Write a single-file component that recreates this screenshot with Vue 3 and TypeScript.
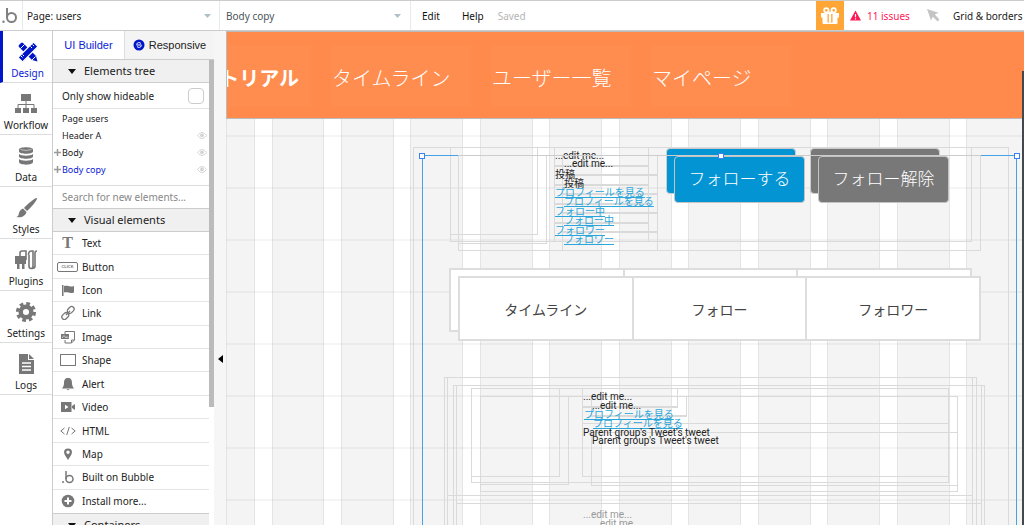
<script setup lang="ts">
import { ref } from 'vue'

interface Rect { left: string; top: string; width: string; height: string }
interface Label { x: number; y: number; text: string; kind: string }

const ORIGIN_X = 226
const ORIGIN_Y = 31

// Converts editor coordinates (two corners) to a box on the canvas.
function box(x1: number, y1: number, x2: number, y2: number): Rect {
  return {
    left: `${x1 - ORIGIN_X}px`,
    top: `${y1 - ORIGIN_Y}px`,
    width: `${x2 - x1}px`,
    height: `${y2 - y1}px`,
  }
}
function at(x: number, y: number) {
  return { left: `${x - ORIGIN_X}px`, top: `${y - ORIGIN_Y}px` }
}

const tools = ['Design', 'Workflow', 'Data', 'Styles', 'Plugins', 'Settings', 'Logs']
const tree = [
  { name: 'Page users', plus: false, eye: false, active: false },
  { name: 'Header A', plus: false, eye: true, active: false },
  { name: 'Body', plus: true, eye: true, active: false },
  { name: 'Body copy', plus: true, eye: true, active: true },
]
const elements = ['Text', 'Button', 'Icon', 'Link', 'Image', 'Shape', 'Alert', 'Video', 'HTML', 'Map', 'Built on Bubble', 'Install more...']
const hideable = ref(false)
const query = ref('')

const columns = Array.from({ length: 12 }, (_, i) => {
  const start = i === 0 ? 226 : Math.round(271.5 + (i - 1) * 69.45)
  const end = i === 11 ? 1040 : Math.round(255 + i * 69.45)
  return box(start, 31, end, 625)
})
const rows = Array.from({ length: 8 }, (_, i) => at(226, 135 + i * 52))

const outlines: Rect[] = [
  [413, 147, 1009, 700],
  [422, 155, 1017, 700],
  [450, 147, 972, 242], [458, 155, 981, 251],
  [450, 147, 538, 235], [458, 155, 547, 244],
  [554, 147, 649, 242], [562, 155, 658, 251],
  [444, 377, 977, 700], [447, 377, 973, 496],
  [453, 385, 985, 700], [456, 385, 982, 504],
  [447, 495, 973, 700], [456, 503, 982, 700],
  [471, 388, 949, 483], [480, 396, 958, 492],
  [471, 388, 560, 477], [480, 396, 569, 485],
  [582, 388, 678, 407], [591, 396, 687, 416],
  [582, 388, 949, 477], [591, 432, 958, 486],
  [582, 423, 949, 477],
].map(([a, b, c, d]) => box(a, b, c, d))

const rules: Rect[] = [
  [554, 165, 649, 167], [554, 184, 649, 186], [554, 203, 649, 205], [554, 222, 649, 224],
  [562, 174, 658, 176], [562, 193, 658, 195], [562, 212, 658, 214], [562, 231, 658, 233],
  [582, 406, 678, 408], [591, 415, 687, 417],
].map(([a, b, c, d]) => box(a, b, c, d))

const labels: Label[] = [
  { x: 555, y: 149, text: '...edit me...', kind: 'edit' },
  { x: 564, y: 157, text: '...edit me...', kind: 'edit' },
  { x: 555, y: 167, text: '投稿', kind: 'plain' },
  { x: 564, y: 176, text: '投稿', kind: 'plain' },
  { x: 555, y: 185, text: 'プロフィールを見る', kind: 'link' },
  { x: 564, y: 194, text: 'プロフィールを見る', kind: 'link' },
  { x: 555, y: 204, text: 'フォロー中', kind: 'link' },
  { x: 564, y: 213, text: 'フォロー中', kind: 'link' },
  { x: 555, y: 223, text: 'フォロワー', kind: 'link' },
  { x: 564, y: 232, text: 'フォロワー', kind: 'link' },
  { x: 583, y: 390, text: '...edit me...', kind: 'edit' },
  { x: 592, y: 399, text: '...edit me...', kind: 'edit' },
  { x: 584, y: 407, text: 'プロフィールを見る', kind: 'link' },
  { x: 593, y: 416, text: 'プロフィールを見る', kind: 'link' },
  { x: 583, y: 426, text: "Parent group's Tweet's tweet", kind: 'tweet' },
  { x: 592, y: 434, text: "Parent group's Tweet's tweet", kind: 'tweet' },
  { x: 583, y: 508, text: '...edit me...', kind: 'edit faded' },
  { x: 592, y: 517, text: '...edit me...', kind: 'edit faded' },
]

const backButtons = [
  { style: box(666, 148, 796, 194), tone: 'blue' },
  { style: box(810, 148, 940, 194), tone: 'gray' },
]
const frontButtons = [
  { style: box(674, 156, 805, 203), tone: 'blue', text: 'フォローする' },
  { style: box(818, 156, 949, 203), tone: 'gray', text: 'フォロー解除' },
]
const tabs = ['タイムライン', 'フォロー', 'フォロワー']
const selection = box(422, 155, 1017, 700)
const selectionEdge = box(458, 155, 981, 156)
const handles = [at(419, 153), at(718, 153), at(1014, 153)]
</script>

<template>
  <div class="editor">
    <header class="topbar">
      <div class="logo">
        <svg width="16" height="18" viewBox="0 0 16 18" fill="none" stroke="#808080" stroke-width="2"><path d="M5 1v9.500" /><circle cx="9.500" cy="10.500" r="4.500" /><circle cx="1.500" cy="14.800" r="1.200" fill="#808080" stroke="none" /></svg>
      </div>
      <label class="picker page">
        <select aria-label="Page"><option>Page: users</option></select>
        <svg width="7" height="4" viewBox="0 0 7 4"><path d="M0 0h7L3.500 4z" fill="#afc0c8" /></svg>
      </label>
      <label class="picker element">
        <select aria-label="Element"><option>Body copy</option></select>
        <svg width="7" height="4" viewBox="0 0 7 4"><path d="M0 0h7L3.500 4z" fill="#afc0c8" /></svg>
      </label>
      <nav class="menu">
        <button>Edit</button>
        <button>Help</button>
        <span class="saved">Saved</span>
      </nav>
      <button class="gift" aria-label="Gift">
        <svg width="20" height="18" viewBox="0 0 20 18"><path fill="#fff" d="M1 6h18v4.500H1zM2.500 10h15v6q0 1-1 1h-13q-1 0-1-1z" /><path fill="#ffa636" d="M7.500 7h5v8.500h-5z" /><path fill="#fff" d="M8.800 6h2.400v9.500H8.800z" /><g fill="none" stroke="#fff" stroke-width="1.700"><circle cx="6.300" cy="3.300" r="2.200" /><circle cx="13.700" cy="3.300" r="2.200" /><path d="M8 4.500 10 6l2-1.500" /></g></svg>
      </button>
      <button class="issues">
        <svg width="11" height="11" viewBox="0 0 11 11"><path fill="#ff1754" d="M5.500.5 11 10.500H0z" /><path fill="#fff" d="M4.900 4h1.200v3.300H4.900zM4.900 8.200h1.200v1.200H4.900z" /></svg>
        11 issues
      </button>
      <svg class="cursor" width="13" height="13" viewBox="0 0 13 13"><path fill="#c4c4c4" d="M0 0 11.500 3.800 7.800 5.600 12.500 10.600 10.600 12.500 5.800 7.700 4 11.500z" /></svg>
      <button class="grid-menu">Grid &amp; borders</button>
    </header>

    <div class="workspace">
      <nav class="rail">
        <button v-for="(t, i) in tools" :key="t" :class="{ current: i === 0 }">
          <svg width="24" height="24" viewBox="0 0 24 24">
            <g v-if="t === 'Design'" fill="#0016c8"><path d="M3 7q-1-1 0-2l2-2q1-1 2 0l13 13 1.500 5.500L16 20z" /><path d="M17.500 2 22 6.500 6.500 22 2 17.500z" stroke="#fff" stroke-width="1.200" /><path d="m14.500 6.500 1.500 1.500m-9.500 6.500 1.500 1.500m-3 0 1.500 1.500m10-13 1.500 1.500" stroke="#fff" /><path d="m4.500 8.500 4-4m7.500 15.500 3.500-3.500" stroke="#fff" /></g>
            <g v-else-if="t === 'Workflow'" fill="#777"><path d="M7 2h10v7H7zM1 16h6v5H1zM9 16h6v5H9zM17 16h6v5h-6z" /><path d="M12 9v7M4 16v-3.500h16V16" fill="none" stroke="#777" /></g>
            <g v-else-if="t === 'Data'" fill="#777"><path d="M5 5.500C5 2.500 19 2.500 19 5.500v2c0 3-14 3-14 0zM5 10c2 2.300 12 2.300 14 0v2.500c0 3-14 3-14 0zM5 15c2 2.300 12 2.300 14 0v3c0 3.500-14 3.500-14 0z" /><path d="M6.500 5.500q5.500 2 11 0" stroke="#ddd" fill="none" stroke-width=".7" /></g>
            <g v-else-if="t === 'Styles'" fill="#777"><path d="M23 2c1 1-6 10-10 13l-3-3C13 8 22 1 23 2z" /><path d="M9 12.500l3.500 3.500c-1 4-5 6-10 5 2-1 2-2 2.500-4s2-4 4-4.500z" /></g>
            <g v-else-if="t === 'Plugins'"><path d="M6 9V5q0-2 2-2h4v9M14.500 7q0-4 3-4H19v15q0 2.500-2 2.500T15 18V7M23 3q-2 0-2 2v13q0 2.500-3 2.500" fill="none" stroke="#777" stroke-width="1.600" /><path d="M1 8h11v8h-1.500v5H8v-5H5.500v5H3v-5H1z" fill="#777" /></g>
            <g v-else-if="t === 'Settings'"><circle cx="12" cy="12" r="5.300" fill="none" stroke="#777" stroke-width="4.500" /><circle cx="12" cy="12" r="8.300" fill="none" stroke="#777" stroke-width="3.500" stroke-dasharray="3.600 2.920" /></g>
            <g v-else fill="#777"><path d="M5 2h9v6h6v14H5z" /><path d="M15 2l5 5h-5z" /><path d="M8 11h9M8 14.500h9M8 18h9" stroke="#fff" stroke-width="1.300" /></g>
          </svg>
          <span>{{ t }}</span>
        </button>
      </nav>

      <aside class="panel">
        <div class="modes">
          <button class="builder">UI Builder</button>
          <button class="responsive">
            <svg width="12" height="12" viewBox="0 0 12 12"><circle cx="6" cy="6" r="5.500" fill="#0016c8" /><path d="M3.500 5.500A2.600 2.600 0 0 1 8 4.500M8.500 6.500A2.600 2.600 0 0 1 4 7.500M3.500 6h5" fill="none" stroke="#fff" /></svg>
            Responsive
          </button>
        </div>
        <div class="scroll">
          <div class="palette">
            <button class="section"><i></i>Elements tree</button>
            <label class="hideable">Only show hideable<input v-model="hideable" type="checkbox" /></label>
            <ul class="tree">
              <li v-for="n in tree" :key="n.name" :class="{ active: n.active }">
                <span class="plus"><svg v-if="n.plus" width="7" height="7" viewBox="0 0 7 7"><path d="M3.500 0v7M0 3.500h7" stroke="#999" stroke-width="1.500" /></svg></span>
                <span class="name">{{ n.name }}</span>
                <svg v-if="n.eye" width="10" height="7" viewBox="0 0 10 7"><path d="M.5 3.500Q5-2.500 9.500 3.500 5 9.500.5 3.500z" fill="none" stroke="#d4d4d4" /><circle cx="5" cy="3.300" r="1.900" fill="#d4d4d4" /></svg>
              </li>
            </ul>
            <input v-model="query" class="search" type="text" aria-label="Search" placeholder="Search for new elements..." />
            <button class="section"><i></i>Visual elements</button>
            <div class="elements">
              <button v-for="e in elements" :key="e">
                <span class="glyph">
                  <b v-if="e === 'Text'" class="t">T</b>
                  <b v-else-if="e === 'Button'" class="click">CLICK</b>
                  <svg v-else width="16" height="16" viewBox="0 0 16 16" fill="#777">
                    <path v-if="e === 'Icon'" d="M2 3h1.500v11H2zM4 4c4-1 5 1.500 10 0v6.500c-5 1.500-6-1-10 0z" />
                    <g v-else-if="e === 'Link'" fill="none" stroke="#777" stroke-width="1.300"><rect x="7" y="2.500" width="7.500" height="5" rx="2.500" transform="rotate(-45 10.700 5)" /><rect x="1.500" y="8.500" width="7.500" height="5" rx="2.500" transform="rotate(-45 5.300 11)" /><path d="m6 10 4-4" /></g>
                    <g v-else-if="e === 'Image'"><path d="M5 5V2.500h9.500V11l-3 3H5v-3M11.500 14v-3h3" fill="none" stroke="#777" /><path d="M1 5h8v5H1z" /><path d="m2 9 2-2.500L6 9l1-1.500L8.500 9" fill="none" stroke="#fff" stroke-width=".6" /></g>
                    <rect v-else-if="e === 'Shape'" x=".5" y="2.500" width="15" height="11" fill="none" stroke="#777" />
                    <path v-else-if="e === 'Alert'" d="M8 2c3 0 4 2 4 5 0 3 1 4 2 5.500H2C3 11 4 10 4 7c0-3 1-5 4-5zM6.500 13.200h3Q8 15.500 6.500 13.200z" />
                    <g v-else-if="e === 'Video'"><path d="M1 3h10.500v10H1zM12 7l3-2v6l-3-2z" /><path fill="#fff" d="M5 5.800 8.500 8 5 10.200z" /></g>
                    <path v-else-if="e === 'HTML'" d="m4.500 5-3.700 3 3.700 3M11.500 5l3.700 3-3.700 3M9.300 4l-2.600 8" fill="none" stroke="#777" />
                    <path v-else-if="e === 'Map'" fill-rule="evenodd" d="M8 2.500c5 0 4.500 5 2.500 7.500L8 14 5.500 10C3.500 7.500 3 2.500 8 2.500zM8 4.500a1.700 1.700 0 1 0 0 3.400 1.700 1.700 0 0 0 0-3.400z" />
                    <g v-else-if="e === 'Built on Bubble'"><circle cx="3" cy="13" r="1" /><path d="M6 2v8" stroke="#777" stroke-width="1.500" /><circle cx="9.500" cy="10" r="3.500" fill="none" stroke="#777" stroke-width="1.500" /></g>
                    <g v-else><circle cx="8" cy="8" r="6.300" /><path d="M8 4.500v7M4.500 8h7" stroke="#fff" stroke-width="2" /></g>
                  </svg>
                </span>
                {{ e }}
              </button>
            </div>
            <button class="section"><i></i>Containers</button>
          </div>
          <div class="track"><div class="thumb"></div></div>
        </div>
      </aside>

      <div class="gutter">
        <button aria-label="Collapse panel"><svg width="5" height="8" viewBox="0 0 5 8"><path d="M5 0v8L0 4z" /></svg></button>
      </div>

      <main class="canvas">
        <div v-for="(c, i) in columns" :key="'c' + i" class="column" :style="c"></div>
        <div v-for="(r, i) in rows" :key="'r' + i" class="row" :style="r"></div>

        <div class="site-header">
          <div class="site-title">トリアル</div>
          <a href="#timeline">タイムライン</a>
          <a href="#users">ユーザー一覧</a>
          <a href="#mypage">マイページ</a>
        </div>

        <div v-for="(b, i) in backButtons" :key="'b' + i" class="cta" :class="b.tone" :style="b.style"></div>
        <div v-for="(o, i) in outlines" :key="'o' + i" class="outline" :style="o"></div>
        <div v-for="(r, i) in rules" :key="'u' + i" class="rule" :style="r"></div>
        <div class="tabs" :style="box(449, 268, 972, 332)"><span v-for="t in tabs" :key="t"></span></div>
        <div class="tabs" :style="box(458, 276, 981, 341)"><button v-for="t in tabs" :key="t">{{ t }}</button></div>

        <template v-for="(l, i) in labels" :key="'l' + i">
          <a v-if="l.kind === 'link'" href="#profile" class="label link" :style="at(l.x, l.y)">{{ l.text }}</a>
          <span v-else class="label" :class="l.kind" :style="at(l.x, l.y)">{{ l.text }}</span>
        </template>

        <div class="selection" :style="selection"></div>
        <div class="selection-edge" :style="selectionEdge"></div>
        <button v-for="b in frontButtons" :key="b.text" class="cta front" :class="b.tone" :style="b.style">{{ b.text }}</button>
        <div v-for="(h, i) in handles" :key="'h' + i" class="handle" :style="h"></div>
        <div class="page-edge"></div>
      </main>
    </div>
  </div>
</template>

<style>
body { margin: 0; overflow: hidden; }
</style>

<style scoped>
* { box-sizing: border-box; }
.editor {
  display: flex; flex-direction: column; height: 100vh; overflow: hidden; background: #fff; color: #222;
  font: 10px/16px "Noto Sans", "Open Sans", "Noto Sans CJK JP", sans-serif;
}
button, input, select { font: inherit; color: inherit; margin: 0; padding: 0; border: 0; background: none; border-radius: 0; }
svg { flex: none; display: block; }

.topbar { display: flex; flex: none; height: 31px; align-items: stretch; border-top: 1px solid #ccc; border-bottom: 1px solid #ccc; overflow: hidden; white-space: nowrap; }
.logo { width: 22px; flex: none; display: flex; align-items: center; padding-left: 2px; }
.picker { display: flex; flex: none; align-items: center; border-left: 1px solid #e4ebee; padding: 0 8px 0 4px; }
.picker select { flex: 1; appearance: none; outline: none; }
.page { width: 197px; }
.element { width: 191px; padding-right: 9px; padding-left: 6px; color: #4c5659; }
.menu { flex: 1; display: flex; align-items: center; border-left: 1px solid #e4ebee; padding-left: 11px; color: #111; }
.menu button { margin-right: 22px; }
.menu button + button { margin-right: 14px; }
.saved { color: #b5b5b5; }
.gift { width: 28px; flex: none; background: #ffa636; display: flex; align-items: center; justify-content: center; }
.issues { display: flex; align-items: center; gap: 6px; color: #ff1754; padding-left: 6px; flex: none; width: 70px; }
.cursor { align-self: center; margin-left: 13px; }
.grid-menu { width: 84px; padding-left: 13px; flex: none; text-align: left; overflow: hidden; }

.workspace { flex: 1; min-height: 0; display: flex; }
.rail { width: 53px; flex: none; border-right: 1px solid #ccc; }
.rail button { width: 100%; height: 52px; display: flex; flex-direction: column; align-items: center; justify-content: flex-end; padding-bottom: 1px; gap: 1px; border-bottom: 1px solid #ddd; white-space: nowrap; }
.rail .current { color: #0a22d8; border-left: 3px solid #0016c8; }

.panel { width: 161px; flex: none; display: flex; flex-direction: column; overflow: hidden; }
.modes { display: flex; height: 29px; flex: none; font: 11px/16px "Liberation Sans", Arial, sans-serif; border-bottom: 1px solid #ccc; }
.builder { width: 71px; color: #0a22d8; }
.responsive { flex: 1; display: flex; align-items: center; justify-content: center; gap: 4px; background: #f4f4f4; border-left: 1px solid #ddd; color: #222; }
.scroll { flex: 1; min-height: 0; display: flex; overflow: hidden; }
.palette { flex: 1; }
.section { width: 100%; height: 23px; display: flex; align-items: center; background: #f0f0f0; border-bottom: 1px solid #ccc; padding-left: 15px; font-size: 11px; }
.section i { border: 4px solid transparent; border-top: 5px solid #111; border-bottom: 0; margin-right: 8px; }
.hideable { height: 26px; display: flex; align-items: center; justify-content: space-between; padding: 0 5px 0 9px; border-bottom: 1px solid #e4e4e4; }
.hideable input { appearance: none; width: 16px; height: 16px; border: 1px solid #ccc; border-radius: 4px; background: #fff; }
.tree { list-style: none; margin: 0; padding: 1px 0 7px; font-size: 9px; border-bottom: 1px solid #ddd; color: #222; }
.tree li { height: 17px; display: flex; align-items: center; padding-right: 2px; }
.plus { width: 9px; padding-left: 1px; }
.name { flex: 1; }
.tree .active { color: #0a22d8; }
.search { display: block; width: 100%; height: 23px; padding-left: 9px; border-bottom: 1px solid #ccc; outline: none; }
.search::placeholder { color: #888; }
.elements { display: grid; grid-template-rows: repeat(12, 1fr); height: 282px; border-bottom: 1px solid #ccc; }
.elements button { display: flex; align-items: center; border-bottom: 1px solid #e4e4e4; }
.elements button:last-child { border-bottom: 0; }
.glyph { width: 29px; display: flex; justify-content: center; }
.t { font: bold 16px/16px "Liberation Serif", serif; color: #777; }
.click { font: bold 4px/8px "Liberation Sans", sans-serif; color: #777; border: 1px solid #777; border-radius: 2px; width: 21px; height: 10px; text-align: center; }
.track { width: 5px; flex: none; }
.thumb { height: 347px; background: #bbb; }

.gutter { width: 12px; flex: none; background: #f6f6f6; padding: 320px 0 0 4px; }

.canvas { position: relative; flex: 1; min-width: 0; overflow: hidden; background: #fff; }
.column { position: absolute; background: #f4f4f4; border: solid #e4e4e4; border-width: 0 1px; }
.row { position: absolute; right: 0; height: 2px; background: rgba(0, 0, 0, 0.04); }
.site-header { position: relative; height: 88px; display: flex; align-items: center; background: #ff8a4b; border: solid #bbb; border-width: 1px 0 1px 1px; padding-top: 2px; font: 300 20px/64px "Noto Sans CJK JP", sans-serif; color: #fff; white-space: nowrap; overflow: hidden; }
.site-header a, .site-title { background: #ff8d50; height: 62px; padding: 1px 0 0 1px; flex: none; color: #fff; text-decoration: none; margin-right: 20px; width: 140px; overflow: hidden; }
.site-header .site-title { font-weight: 700; width: 84px; padding: 1px 12px 0 0; display: flex; justify-content: flex-end; }

.outline { position: absolute; border: 1px solid #dadada; }
.rule { position: absolute; background: #dadada; }
.tabs { position: absolute; display: flex; border: 2px solid #ddd; background: #fff; }
.tabs > * { flex: 1; border-left: 2px solid #ddd; font: 14px/20px "Noto Sans CJK JP", sans-serif; color: #444; }
.tabs > :first-child { border-left: 0; }
.label { position: absolute; white-space: nowrap; font: 10px/14px "Noto Sans CJK JP", sans-serif; color: #222; }
.edit { font-family: Roboto, sans-serif; }
.tweet { font-family: Roboto, sans-serif; }
.faded { color: #999; }
.link { color: #2ba6da; text-decoration: underline; }
.cta { position: absolute; border: 1px solid #ccc; border-radius: 4px; color: #fff; font: 300 17px/24px "Noto Sans CJK JP", sans-serif; text-align: center; white-space: nowrap; }
.front { border: 1px solid #c4c4c4; padding-bottom: 3px; }
.blue { background: #0394d4; }
.gray { background: #787878; }
.selection { position: absolute; border: 1px solid #46a2e4; }
.selection-edge { position: absolute; background: #ccc; }
.handle { position: absolute; width: 6px; height: 6px; background: #fff; border: 1px solid #3b82f0; }
.page-edge { position: absolute; right: 0; top: 40px; bottom: 0; width: 2px; background: #44484c; }
</style>
